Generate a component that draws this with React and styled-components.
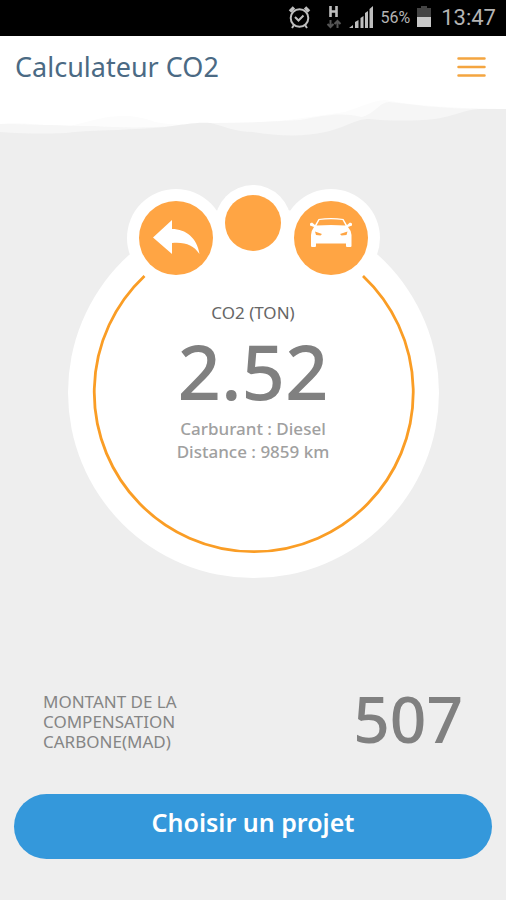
import React from "react";
import styled, { createGlobalStyle } from "styled-components";

const GlobalStyle = createGlobalStyle`
  * { box-sizing: border-box; }
  body { margin: 0; background: #eeeeee; }
  button { border: 0; padding: 0; font: inherit; cursor: pointer; }
  h1, p { margin: 0; }
`;

const Screen = styled.div`
  min-height: 100vh;
  display: flex;
  flex-direction: column;
  background: #eeeeee;
  font-family: "Noto Sans", "Open Sans", sans-serif;
`;

const StatusBar = styled.div`
  height: 36px;
  padding: 0 10px 0 0;
  display: flex;
  align-items: center;
  justify-content: flex-end;
  background: #000;
  color: #b4b4b4;
  font-family: Roboto, sans-serif;
`;

const StatusIcons = styled.svg`
  display: block;
  width: 92px;
  height: 36px;
  margin-right: 8px;
`;

const BatteryLevel = styled.span`
  font-size: 16px;
  line-height: 36px;
`;

const BatteryIcon = styled.svg`
  display: block;
  width: 14px;
  height: 36px;
  margin: 0 10px 0 7px;
`;

const Clock = styled.time`
  font-size: 22px;
  line-height: 36px;
`;

const Header = styled.header`
  height: 62px;
  padding: 0 20px 0 15px;
  display: flex;
  align-items: center;
  justify-content: space-between;
  background: #fff;
`;

const Title = styled.h1`
  color: #4b6a84;
  font-size: 27px;
  font-weight: 400;
  line-height: 36px;
`;

const MenuButton = styled.button`
  width: 29px;
  height: 22px;
  background: none;
  svg { display: block; }
`;

const Clouds = styled.svg`
  display: block;
  width: 100%;
  height: 40px;
`;

const Main = styled.main`
  flex: 1;
  display: flex;
  flex-direction: column;
  padding: 69px 14px 41px;
`;

const Gauge = styled.section`
  position: relative;
  width: 371px;
  max-width: 100%;
  aspect-ratio: 1;
  margin: 0 auto;
  border-radius: 50%;
  background: #fff;
`;

const Ring = styled.svg`
  position: absolute;
  inset: 0;
  width: 100%;
  height: 100%;
`;

const RoundButton = styled.button`
  position: absolute;
  left: ${(p) => p.$left}%;
  top: ${(p) => p.$top}px;
  width: ${(p) => p.$size}px;
  height: ${(p) => p.$size}px;
  transform: translateX(-50%);
  border-radius: 50%;
  background: #ffa544;
  box-shadow: 0 0 0 ${(p) => p.$halo}px #fff;
  svg { display: block; width: 100%; height: 100%; }
`;

const Reading = styled.div`
  position: relative;
  padding-top: 94px;
  display: flex;
  flex-direction: column;
  align-items: center;
  text-align: center;
`;

const Unit = styled.p`
  color: #666;
  font-size: 17px;
  line-height: 24px;
`;

const Value = styled.p`
  color: #808080;
  font-size: ${(p) => p.$size}px;
  line-height: ${(p) => p.$line}px;
  font-weight: 500;
`;

const Detail = styled.p`
  color: #a0a0a0;
  font-size: 17px;
  font-weight: 500;
  line-height: 23px;
`;

const Summary = styled.section`
  margin-top: auto;
  padding: 0 29px 42px;
  display: flex;
  align-items: flex-start;
  justify-content: space-between;
`;

const SummaryLabel = styled.p`
  width: 150px;
  color: #858585;
  font-size: 17px;
  line-height: 20px;
`;

const ProjectButton = styled.button`
  && { padding-bottom: 9px; }
  width: 100%;
  height: 65px;
  border-radius: 33px;
  background: #3498db;
  color: #fff;
  font-size: 25px;
  font-weight: 600;
`;

export default function App() {
  return (
    <Screen>
      <GlobalStyle />
      <StatusBar>
        <StatusIcons viewBox="0 0 92 36" aria-hidden="true">
          <g transform="translate(6 0)">
            <g fill="none" stroke="#bebebe" strokeWidth="2">
              <circle cx="12.500" cy="18" r="8.800" />
              <path d="M8 17l3.500 3.500 5-5M7 25l-2 3M18 25l2 3" />
              <path d="M3 11.500l4-4M22 11.500l-4-4" strokeWidth="3.500" />
            </g>
            <path d="M43.500 6v11M49.500 6v11M43 11.500h7" stroke="#bebebe" strokeWidth="2.600" />
            <path d="M43.500 20v7m-3-3l3 3 3-3M50.500 28v-7m-3 3l3-3 3 3" fill="none" stroke="#555" strokeWidth="2" />
            <path d="M62 28h4v-3zM68 28v-6l3.500-2v8zM73.500 28v-10l3-2v12zM78 28v-15l3-2v17zM82.500 28v-19l3.500-3v22z" fill="#bebebe" />
          </g>
        </StatusIcons>
        <BatteryLevel>56%</BatteryLevel>
        <BatteryIcon viewBox="0 0 14 36" aria-hidden="true">
          <path d="M0 8h4v-2h6v2h4v9H0z" fill="#444" />
          <path d="M0 17h14v10H0z" fill="#c8c8c8" />
        </BatteryIcon>
        <Clock>13:47</Clock>
      </StatusBar>

      <Header>
        <Title>Calculateur CO2</Title>
        <MenuButton aria-label="Menu">
          <svg width="29" height="22" viewBox="0 0 29 22">
            <path d="M1.500 2.500h26M1.500 11h26M1.500 19.500h26" stroke="#f4a540" strokeWidth="2.500" strokeLinecap="round" />
          </svg>
        </MenuButton>
      </Header>

      <Clouds viewBox="0 0 506 40" preserveAspectRatio="none" aria-hidden="true">
        <path d="M0 0H506V40H0z" fill="#fff" />
        <path d="M0 26C20 23 40 28 70 28C100 20 125 12 155 24C185 30 205 24 250 25C290 23 315 18 345 14C360 9 372 3 385 2C415 8 455 10 506 11V40H0z" fill="#fcfcfc" />
        <path d="M0 26C30 26 65 28 95 28C135 31 175 29 210 25C240 25 270 24 300 22C325 17 342 14 362 19C374 16 380 4 389 4C410 6 430 10 480 11H506V40H0z" fill="#f6f6f6" />
        <path d="M0 34C30 36 60 36 75 34C100 32 135 32 165 29C182 27 196 24 210 25C225 28 235 34 253 34C275 38 305 39 325 34C345 30 355 21 369 21C390 23 415 23 435 21C455 18 463 12 480 11H506V40H0z" fill="#eeeeee" />
      </Clouds>

      <Main>
        <Gauge aria-label="CO2">
          <RoundButton $left={29.3} $top={-6} $size={74} $halo={12} aria-label="Retour">
            <svg viewBox="0 0 74 74">
              <path d="M14 36.500L33 19V28C47 28 58 37 60.500 53C54 44 47 41 33 42V53z" fill="#fff" />
            </svg>
          </RoundButton>
          <RoundButton $left={50} $top={-12} $size={56} $halo={10} aria-label="Type" />
          <RoundButton $left={70.9} $top={-6} $size={74} $halo={12} aria-label="Voiture">
            <svg viewBox="0 0 74 74">
              <path d="M21 24L24.500 18Q37 16 49.500 18L53 24L56 21.500L58 22.500V24.500L54 26Q57.500 30 57.500 34V45Q57.500 46 56.500 46H53Q52 46 52 45V42.500H22V45Q22 46 21 46H18Q17 46 17 45V34Q17 30 20 26L16 24.500V22.500L18 21.500z" fill="#fff" />
              <path d="M22.500 24.500L25.500 19Q37 17.500 48.500 19L51.500 24.500Q37 23.500 22.500 24.500z" fill="#ffa544" />
              <path d="M21 30.500L28 33L26.500 34.500L22 34zM53.500 30.500L46 33L47.500 34.500L52.500 34z" fill="#ffa544" />
            </svg>
          </RoundButton>
          <Ring viewBox="0 0 371 371" pointerEvents="none" aria-hidden="true">
            <path d="M76.500 69A159.500 159.500 0 1 0 295 69" fill="none" stroke="#fa9d25" strokeWidth="2.800" />
          </Ring>
          <Reading>
            <Unit>CO2 (TON)</Unit>
            <Value $size={76} $line={92}>2.52</Value>
            <Detail>Carburant : Diesel</Detail>
            <Detail>Distance : 9859 km</Detail>
          </Reading>
        </Gauge>

        <Summary>
          <SummaryLabel>MONTANT DE LA COMPENSATION CARBONE(MAD)</SummaryLabel>
          <Value $size={64} $line={54}>507</Value>
        </Summary>
        <ProjectButton>Choisir un projet</ProjectButton>
      </Main>
    </Screen>
  );
}
